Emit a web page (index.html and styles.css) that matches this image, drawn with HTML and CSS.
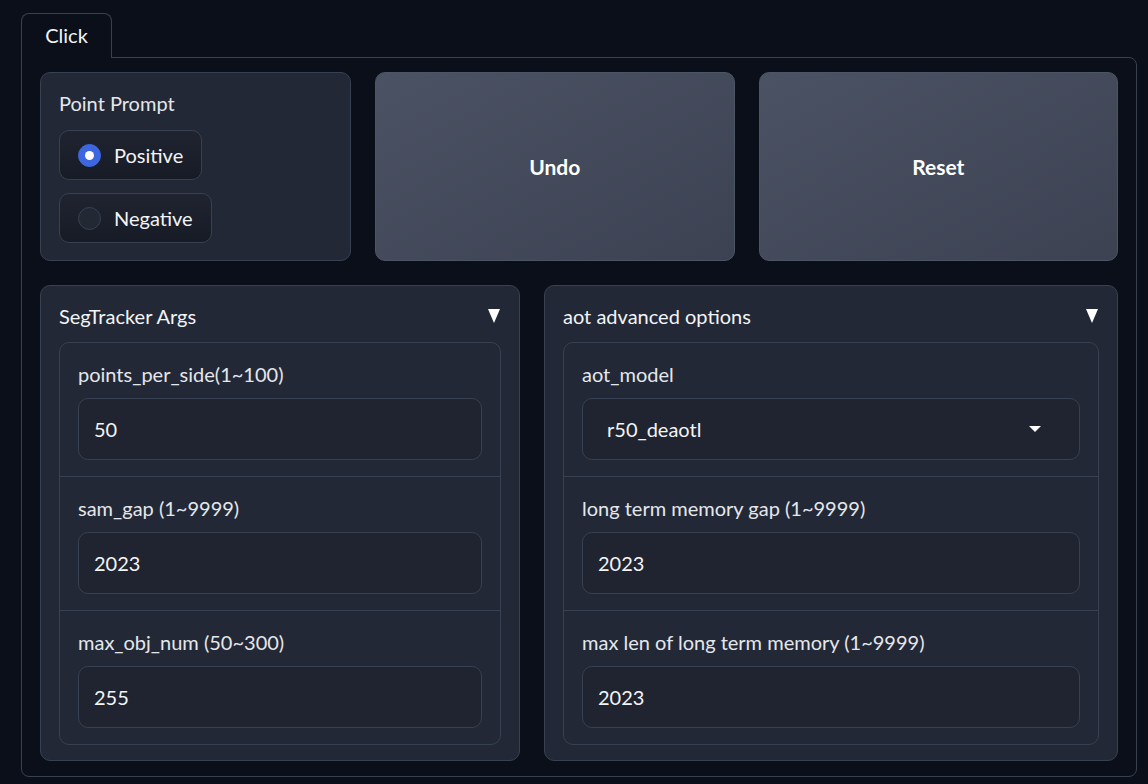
FILE: index.html
```html
<!DOCTYPE html>
<html>
<head>
<meta charset="utf-8">
<link rel="stylesheet" href="styles.css">
</head>
<body>
<div class="tabs">
  <div class="tab-nav"><button class="tab active">Click</button></div>
  <div class="panel">
    <div class="row row-top">
      <div class="card prompt">
        <div class="label">Point Prompt</div>
        <div class="radios">
          <label class="radio checked"><span class="dot"></span><span>Positive</span></label>
          <label class="radio"><span class="dot"></span><span>Negative</span></label>
        </div>
      </div>
      <button class="btn">Undo</button>
      <button class="btn">Reset</button>
    </div>
    <div class="row row-bottom">
      <div class="card accordion">
        <div class="acc-head"><span>SegTracker Args</span><span class="tri"></span></div>
        <div class="group">
          <div class="field">
            <div class="label">points_per_side(1~100)</div>
            <div class="input">50</div>
          </div>
          <div class="field">
            <div class="label">sam_gap (1~9999)</div>
            <div class="input">2023</div>
          </div>
          <div class="field">
            <div class="label">max_obj_num (50~300)</div>
            <div class="input">255</div>
          </div>
        </div>
      </div>
      <div class="card accordion">
        <div class="acc-head"><span>aot advanced options</span><span class="tri"></span></div>
        <div class="group">
          <div class="field">
            <div class="label">aot_model</div>
            <div class="input select"><span>r50_deaotl</span><span class="caret"></span></div>
          </div>
          <div class="field">
            <div class="label">long term memory gap (1~9999)</div>
            <div class="input">2023</div>
          </div>
          <div class="field">
            <div class="label">max len of long term memory (1~9999)</div>
            <div class="input">2023</div>
          </div>
        </div>
      </div>
    </div>
  </div>
</div>
</body>
</html>
```

FILE: styles.css
```css
* { box-sizing: border-box; }
html, body {
  margin: 0;
  background: #0b0f19;
  font-family: "Source Sans Pro", Lato, "Noto Sans", sans-serif;
  color: #e5e7eb;
}
.tabs {
  padding: 13px 11px 8px 21px;
}
.tab-nav {
  display: flex;
  height: 44px;
}
.tab {
  width: 91px;
  height: 45px;
  border: 1px solid #374151;
  border-bottom: none;
  border-radius: 8px 8px 0 0;
  background: #0b0f19;
  color: #f3f4f6;
  font-family: inherit;
  font-size: 20px;
  padding: 0 0 3px 0;
  position: relative;
  z-index: 1;
}
.panel {
  border: 1px solid #374151;
  border-radius: 0 8px 8px 8px;
  padding: 14px 18px 15px 18px;
  display: flex;
  flex-direction: column;
  gap: 24px;
}
.row { display: grid; gap: 24px; }
.row-top { grid-template-columns: 311px 1fr 1fr; height: 189px; }
.row-bottom { grid-template-columns: 480px 1fr; }
.card {
  background: #222836;
  border: 1px solid #374151;
  border-radius: 10px;
}
.label {
  font-size: 20px;
  line-height: 28px;
  color: #e5e7eb;
}
.prompt { padding: 16px 18px 15px 18px; }
.prompt .label { margin-bottom: 13px; }
.radios { display: flex; flex-direction: column; gap: 13px; align-items: flex-start; }
.radio {
  display: flex;
  align-items: center;
  gap: 13px;
  height: 50px;
  padding: 0 18px;
  border: 1px solid #374151;
  border-radius: 10px;
  background: linear-gradient(to bottom, #1f2430, #161b26);
  font-size: 20px;
  color: #f3f4f6;
}
.dot {
  width: 23px;
  height: 23px;
  border-radius: 50%;
  border: 1px solid #374151;
  background: #232835;
  display: flex;
  align-items: center;
  justify-content: center;
}
.radio.checked .dot {
  background: #3d67e0;
  border-color: #3d67e0;
}
.radio.checked .dot::after {
  content: "";
  width: 9px;
  height: 9px;
  border-radius: 50%;
  background: #fff;
}
.btn {
  border: 1px solid #4b5563;
  border-radius: 10px;
  background: linear-gradient(to bottom right, #4b5263, #3c4252);
  color: #fff;
  font-family: inherit;
  font-weight: 700;
  font-size: 21px;
  padding-bottom: 2px;
}
.accordion { padding: 16px 18px 15px 18px; }
.acc-head {
  display: flex;
  justify-content: space-between;
  align-items: center;
  font-size: 20px;
  line-height: 28px;
  color: #f3f4f6;
  margin-bottom: 12px;
}
.tri {
  width: 0; height: 0;
  border-left: 6px solid transparent;
  border-right: 6px solid transparent;
  border-top: 14px solid #fff;
  margin-right: 1px;
}
.group {
  border: 1px solid #374151;
  border-radius: 10px;
}
.field {
  padding: 17px 18px 16px 18px;
}
.field + .field { border-top: 1px solid #374151; }
.field .label { margin-bottom: 10px; }
.input {
  height: 62px;
  border: 1px solid #374151;
  border-radius: 10px;
  background: #1f2430;
  display: flex;
  align-items: center;
  padding: 0 15px;
  font-size: 20px;
  color: #f3f4f6;
}
.select {
  justify-content: space-between;
  padding: 0 38px 0 24px;
}
.caret {
  width: 0; height: 0;
  border-left: 6px solid transparent;
  border-right: 6px solid transparent;
  border-top: 6px solid #fff;
}
```
